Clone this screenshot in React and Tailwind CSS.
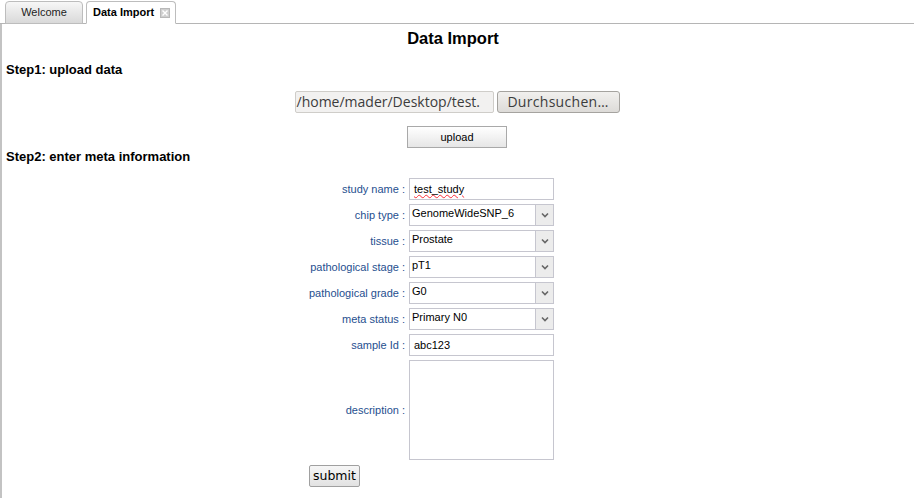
import React from "react";

const labelCls = "text-[11px] text-[#1f4f8f] text-right pr-[4px] leading-none";
const boxCls = "h-[22px] w-[145px] border border-[#c6c6cf] bg-white";

const Row = ({ label, children, tall }) => (
  <div className={`flex items-center ${tall ? "h-[100px]" : "h-[22px]"}`}>
    <div className={`w-[100px] ${labelCls}`}>{label}</div>
    {children}
  </div>
);

const Select = ({ value }) => (
  <div className={`${boxCls} flex items-stretch`}>
    <div className="flex-1 pl-[2px] pt-[2px] text-[11px] text-black leading-[13px]">{value}</div>
    <div className="w-[18px] bg-[#ececec] border-l border-[#c6c6cf] flex items-center justify-center">
      <svg width="8" height="6" viewBox="0 0 8 6">
        <path d="M1 1.5 L4 4.5 L7 1.5" stroke="#666" strokeWidth="1.6" fill="none" />
      </svg>
    </div>
  </div>
);

const Text = ({ value, squiggle }) => (
  <div className={`${boxCls} pl-[4px] flex items-center text-[11px] text-black`}>
    <span className={squiggle ? "underline decoration-wavy decoration-red-500 decoration-1" : ""}>{value}</span>
  </div>
);

export default function App() {
  return (
    <div className="w-[914px] h-[498px] bg-white overflow-hidden" style={{ fontFamily: '"Liberation Sans", Arial, sans-serif' }}>
      {/* tab bar */}
      <div className="flex items-end h-[24px] pl-[5px] gap-[3px] border-b border-[#b5b5b5]">
        <div className="h-[23px] w-[78px] -mb-px border border-[#bdbdbd] rounded-t-[4px] bg-gradient-to-b from-[#f7f7f7] to-[#d9d9d9] flex items-center justify-center text-[11px] text-[#222]">
          Welcome
        </div>
        <div className="h-[23px] w-[90px] -mb-px border border-[#bdbdbd] border-b-white rounded-t-[4px] bg-white flex items-center pl-[6px] gap-[6px] text-[11px] font-bold text-black">
          Data Import
          <span className="w-[10px] h-[10px] bg-[#cfcfcf] border border-[#b8b8b8] flex items-center justify-center">
            <svg width="6" height="6" viewBox="0 0 6 6">
              <path d="M0.5 0.5 L5.5 5.5 M5.5 0.5 L0.5 5.5" stroke="#fff" strokeWidth="1.4" />
            </svg>
          </span>
        </div>
      </div>

      {/* panel */}
      <div className="h-[474px] border-l-2 border-[#c3c3c3] pl-[4px]">
        <h1 className="text-[16.5px] font-bold text-center text-black pt-[4px] pr-[14px] leading-[20px]">Data Import</h1>
        <h2 className="text-[13px] font-bold text-black mt-[14px] leading-[16px]">Step1: upload data</h2>

        <div className="flex justify-center mt-[13px] gap-[3px] pr-[6px]" style={{ fontFamily: '"Open Sans", "DejaVu Sans", sans-serif' }}>
          <div className="w-[199px] h-[22px] bg-[#f2f1f0] border border-[#cfcdc9] rounded-[2px] overflow-hidden whitespace-nowrap pl-[1px] text-[14px] leading-[20px] text-[#3c3c3c]">
            /home/mader/Desktop/test.
          </div>
          <div className="w-[123px] h-[22px] rounded-[3px] border border-[#a5a39f] bg-gradient-to-b from-[#f1f0ee] to-[#dddbd8] text-center text-[14px] leading-[20px] text-[#3c3c3c] tracking-[0.3px]">
            Durchsuchen…
          </div>
        </div>

        <div className="flex justify-center mt-[13px] pr-[6px]">
          <div className="w-[100px] h-[22px] border border-[#a9a9a9] bg-gradient-to-b from-white to-[#e6e6e6] text-center text-[11px] leading-[20px] text-black">
            upload
          </div>
        </div>

        <h2 className="text-[13px] font-bold text-black mt-[1px] leading-[16px]">Step2: enter meta information</h2>

        <div className="ml-[303px] mt-[13px] flex flex-col gap-[4px]">
          <Row label="study name :"><Text value="test_study" squiggle /></Row>
          <Row label="chip type :"><Select value="GenomeWideSNP_6" /></Row>
          <Row label="tissue :"><Select value="Prostate" /></Row>
          <Row label="pathological stage :"><Select value="pT1" /></Row>
          <Row label="pathological grade :"><Select value="G0" /></Row>
          <Row label="meta status :"><Select value="Primary N0" /></Row>
          <Row label="sample Id :"><Text value="abc123" /></Row>
          <Row label="description :" tall>
            <div className="w-[145px] h-[100px] border border-[#c6c6cf] bg-white" />
          </Row>
          <div className="flex mt-[1px]">
            <div className="h-[22px] px-[3px] border border-[#a0a0a0] rounded-[2px] bg-gradient-to-b from-[#f6f6f6] to-[#e2e2e2] text-[12.5px] leading-[20px] text-black" style={{ fontFamily: '"DejaVu Sans", sans-serif' }}>
              submit
            </div>
          </div>
        </div>
      </div>
    </div>
  );
}
